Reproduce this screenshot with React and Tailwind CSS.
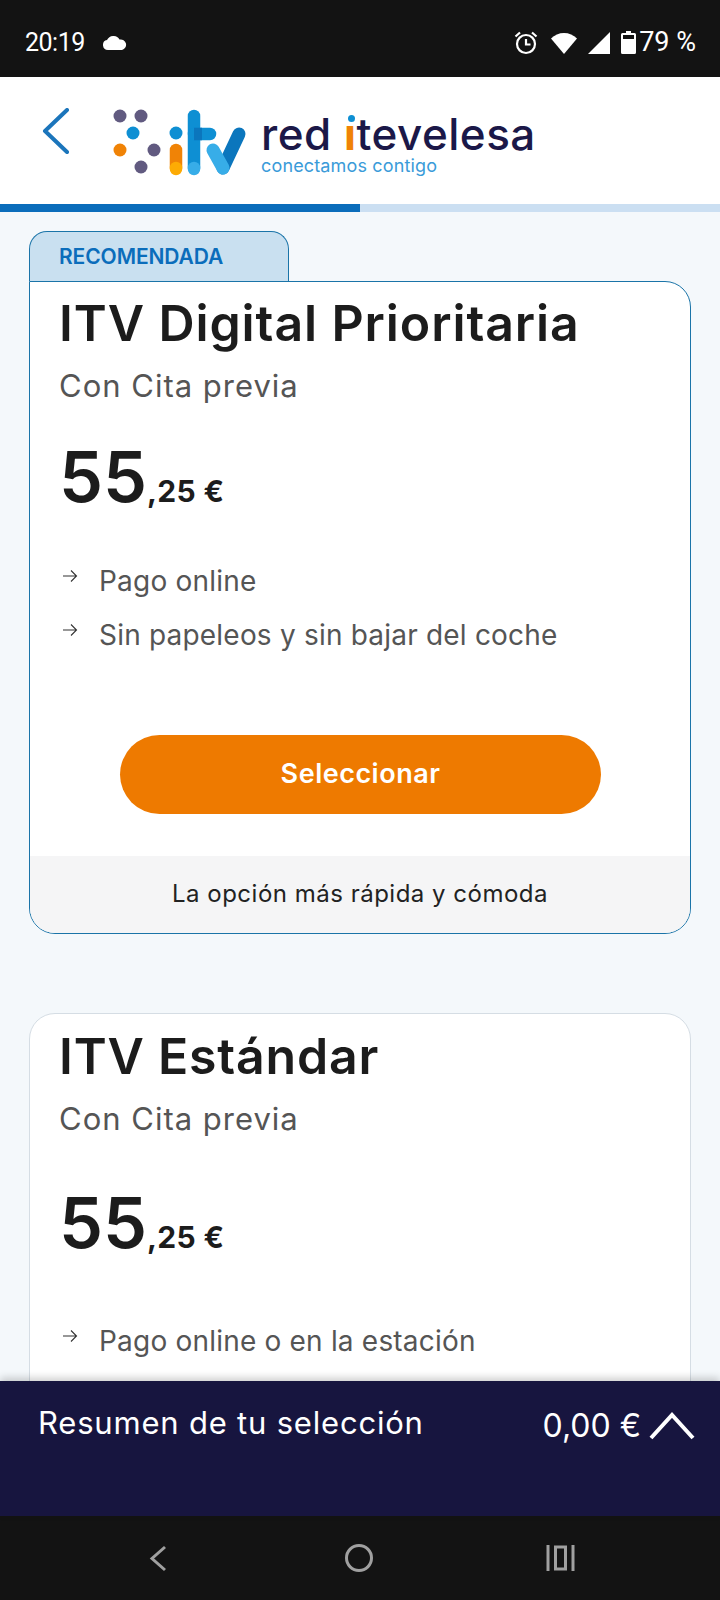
import React from 'react';

const Arrow = () => (
  <svg width="16" height="16" viewBox="0 0 16 16" fill="none" stroke="#333" strokeWidth="1.1" className="shrink-0 mr-[21px] mt-[3px] ml-[3px]">
    <path d="M1 8h13M9 2.5 14.5 8 9 13.5" />
  </svg>
);

const LogoMark = () => (
  <svg width="135" height="70" viewBox="113 106 135 70" className="shrink-0">
    <circle cx="120" cy="114" r="6.5" fill="#615a80" />
    <circle cx="141" cy="114" r="6.5" fill="#615a80" />
    <circle cx="133" cy="131" r="6.5" fill="#0e8fd3" />
    <circle cx="120" cy="148" r="6.5" fill="#f08306" />
    <circle cx="154" cy="148" r="6.5" fill="#615a80" />
    <circle cx="141" cy="165" r="6.5" fill="#615a80" />
    <circle cx="176" cy="131" r="6.5" fill="#0e8fd3" />
    <path d="M176 148v18" stroke="#f08306" strokeWidth="12.5" strokeLinecap="round" />
    <path d="M176 166v1" stroke="#fdab04" strokeWidth="12.5" strokeLinecap="round" />
    <path d="M194 114v52" stroke="#0e8fd3" strokeWidth="12.5" strokeLinecap="round" />
    <path d="M194 132h16" stroke="#0e8fd3" strokeWidth="12.5" strokeLinecap="round" />
    <path d="M194 132h8" stroke="#0b76bd" strokeWidth="12.5" />
    <path d="M194 166v1" stroke="#37ade8" strokeWidth="12.5" strokeLinecap="round" />
    <path d="M223 166 239 132" stroke="#0b76bd" strokeWidth="13" strokeLinecap="round" />
    <path d="M213 148 223 166" stroke="#37ade8" strokeWidth="13" strokeLinecap="round" />
  </svg>
);

const StatusBar = () => (
  <div className="h-[77px] bg-[#131313] flex items-center pl-[25px] pr-[24px] pt-[8px] text-white shrink-0 font-['Roboto',sans-serif]">
    <span className="text-[25px] tracking-[-0.5px] leading-none">20:19</span>
    <svg width="25" height="14" viewBox="0 0 25 14" fill="white" className="ml-[17px]">
      <path d="M6 14a5 5 0 0 1-1-9.9A7 7 0 0 1 17.5 3.6 5.3 5.3 0 0 1 20 14Z" />
    </svg>
    <div className="ml-auto flex items-center">
      <svg width="28" height="28" viewBox="0 0 28 28" fill="none" stroke="white" strokeWidth="2.2">
        <circle cx="14" cy="15" r="9" />
        <path d="M14 10v5.5h4.5" />
        <path d="M3.5 7.5 8 3.5M24.500 7.5 20 3.5" />
      </svg>
      <svg width="26" height="22" viewBox="0 0 26 22" fill="white" className="ml-[11px]">
        <path d="M13 22 0 6.5C3.500 3 8 1 13 1s9.500 2 13 5.500Z" />
      </svg>
      <svg width="22" height="22" viewBox="0 0 22 22" fill="white" className="ml-[11px]">
        <path d="M22 0v22H0Z" />
      </svg>
      <svg width="15" height="23" viewBox="0 0 15 23" fill="white" className="ml-[11px]">
        <path fillRule="evenodd" d="M5 0h5v2h3.500a1.500 1.500 0 0 1 1.500 1.500V21.500a1.500 1.500 0 0 1-1.500 1.500h-12A1.500 1.500 0 0 1 0 21.500V3.500A1.500 1.500 0 0 1 1.500 2H5ZM2 4v4h11V4Z" />
      </svg>
      <span className="text-[27px] leading-none ml-[3px]">79 %</span>
    </div>
  </div>
);

const Header = () => (
  <div className="h-[127px] bg-white flex items-start shrink-0 pl-[42px] pt-[31px]">
    <svg width="28" height="46" viewBox="0 0 28 46" fill="none" stroke="#1b75bb" strokeWidth="4" strokeLinecap="round" strokeLinejoin="round">
      <path d="M25 2 3 23l22 21" />
    </svg>
    <div className="ml-[43px] flex">
      <LogoMark />
      <div className="ml-[13px] font-['Inter',sans-serif] pt-[4px]">
        <div className="text-[44px] leading-[44px] font-medium text-[#1b1848] whitespace-nowrap tracking-[0.5px]">
          red <span className="relative text-[#f08306] font-bold">ı<span className="absolute left-[4px] top-[8px] w-[7px] h-[7px] rounded-full bg-[#0e8fd3]" /></span>tevelesa
        </div>
        <div className="text-[18px] leading-[20px] text-[#3a9bd9] whitespace-nowrap tracking-[0.15px]">conectamos contigo</div>
      </div>
    </div>
  </div>
);

const Price = () => (
  <div className="flex items-baseline font-['Inter',sans-serif] text-[#1c1c1c] font-semibold">
    <span className="text-[70px] leading-[70px]">55</span>
    <span className="text-[30px] leading-[30px] font-bold tracking-[0.3px]">,25 €</span>
  </div>
);

const Bullet = ({ children }) => (
  <div className="flex items-start text-[28px] leading-[40px] text-[#555] whitespace-nowrap tracking-[0.2px]">
    <div className="pt-[4px]"><Arrow /></div>
    <span>{children}</span>
  </div>
);

const App = () => {
  return (
    <div className="w-[720px] h-[1600px] flex flex-col overflow-hidden bg-[#f4f8fb] font-['Inter',sans-serif]">
      <StatusBar />
      <Header />
      <div className="h-[8px] flex shrink-0">
        <div className="w-1/2 bg-[#0b6dbb]" />
        <div className="w-1/2 bg-[#cbdff2]" />
      </div>

      <div className="flex-1 overflow-hidden px-[29px] pt-[19px] min-h-0">
        {/* tab */}
        <div className="w-[260px] h-[50px] bg-[#c9e0f0] border border-b-0 border-[#1a74a8] rounded-t-[18px] pl-[29px] pt-[13px] text-[21px] leading-[24px] font-semibold text-[#0b6dbb] tracking-[-0.1px]">
          RECOMENDADA
        </div>

        <div className="h-[653px] border border-[#1a74a8] rounded-[26px] rounded-tl-none bg-white overflow-hidden flex flex-col">
          <div className="flex-1 pl-[29px]">
            <h2 className="text-[50px] leading-[60px] font-semibold text-[#1c1c1c] whitespace-nowrap mt-[11px] tracking-[0.9px]">ITV Digital Prioritaria</h2>
            <p className="text-[31px] leading-[40px] text-[#555] mt-[13px] tracking-[1px]">Con Cita previa</p>
            <div className="mt-[36px]"><Price /></div>
            <div className="mt-[49px] flex flex-col gap-[14px]">
              <Bullet>Pago online</Bullet>
              <Bullet>Sin papeleos y sin bajar del coche</Bullet>
            </div>
            <div className="mt-[80px] ml-[61px] w-[481px] h-[79px] rounded-full bg-[#ee7a00] flex items-center justify-center text-white text-[27px] font-semibold tracking-[0.5px]">
              Seleccionar
            </div>
          </div>
          <div className="h-[77px] bg-[#f5f5f6] flex items-center justify-center text-[24px] text-[#222] pb-[2px] tracking-[0.5px]">
            La opción más rápida y cómoda
          </div>
        </div>

        <div className="mt-[79px] h-[500px] border border-[#d5dde4] rounded-[26px] bg-white pl-[29px]">
          <h2 className="text-[50px] leading-[60px] font-semibold text-[#1c1c1c] whitespace-nowrap mt-[12px] tracking-[0.8px]">ITV Estándar</h2>
          <p className="text-[31px] leading-[40px] text-[#555] mt-[13px] tracking-[1px]">Con Cita previa</p>
          <div className="mt-[49px]"><Price /></div>
          <div className="mt-[63px]">
            <Bullet>Pago online o en la estación</Bullet>
          </div>
        </div>
      </div>

      {/* resumen */}
      <div className="h-[135px] shrink-0 bg-[#17153f] text-white flex items-start pl-[38px] pr-[24px] pt-[22px] shadow-[0_-3px_8px_rgba(0,0,0,0.2)] z-10">
        <span className="text-[31px] leading-[40px] tracking-[0.8px]">Resumen de tu selección</span>
        <span className="ml-auto text-[32px] leading-[40px] mt-[3px]">0,00 €</span>
        <svg width="48" height="30" viewBox="0 0 48 30" fill="none" stroke="white" strokeWidth="4" className="ml-[7px] mt-[8px]">
          <path d="M3 27 24 4l21 23" />
        </svg>
      </div>

      {/* android nav */}
      <div className="h-[84px] shrink-0 bg-[#131313] flex items-center">
        <div className="w-full flex items-center justify-between pl-[148px] pr-[145px]">
          <svg width="19" height="27" viewBox="0 0 19 27" fill="none" stroke="#a0a0a0" strokeWidth="3">
            <path d="M17 2 4 13.500 17 25" />
          </svg>
          <svg width="28" height="28" viewBox="0 0 28 28" fill="none" stroke="#a0a0a0" strokeWidth="3" className="ml-[5px]">
            <circle cx="14" cy="14" r="12.500" />
          </svg>
          <svg width="29" height="26" viewBox="0 0 29 26" fill="none" stroke="#a0a0a0" strokeWidth="3">
            <path d="M2 0v26M27 0v26" />
            <rect x="9.500" y="2" width="10" height="22" />
          </svg>
        </div>
      </div>
    </div>
  );
};

export default App;
